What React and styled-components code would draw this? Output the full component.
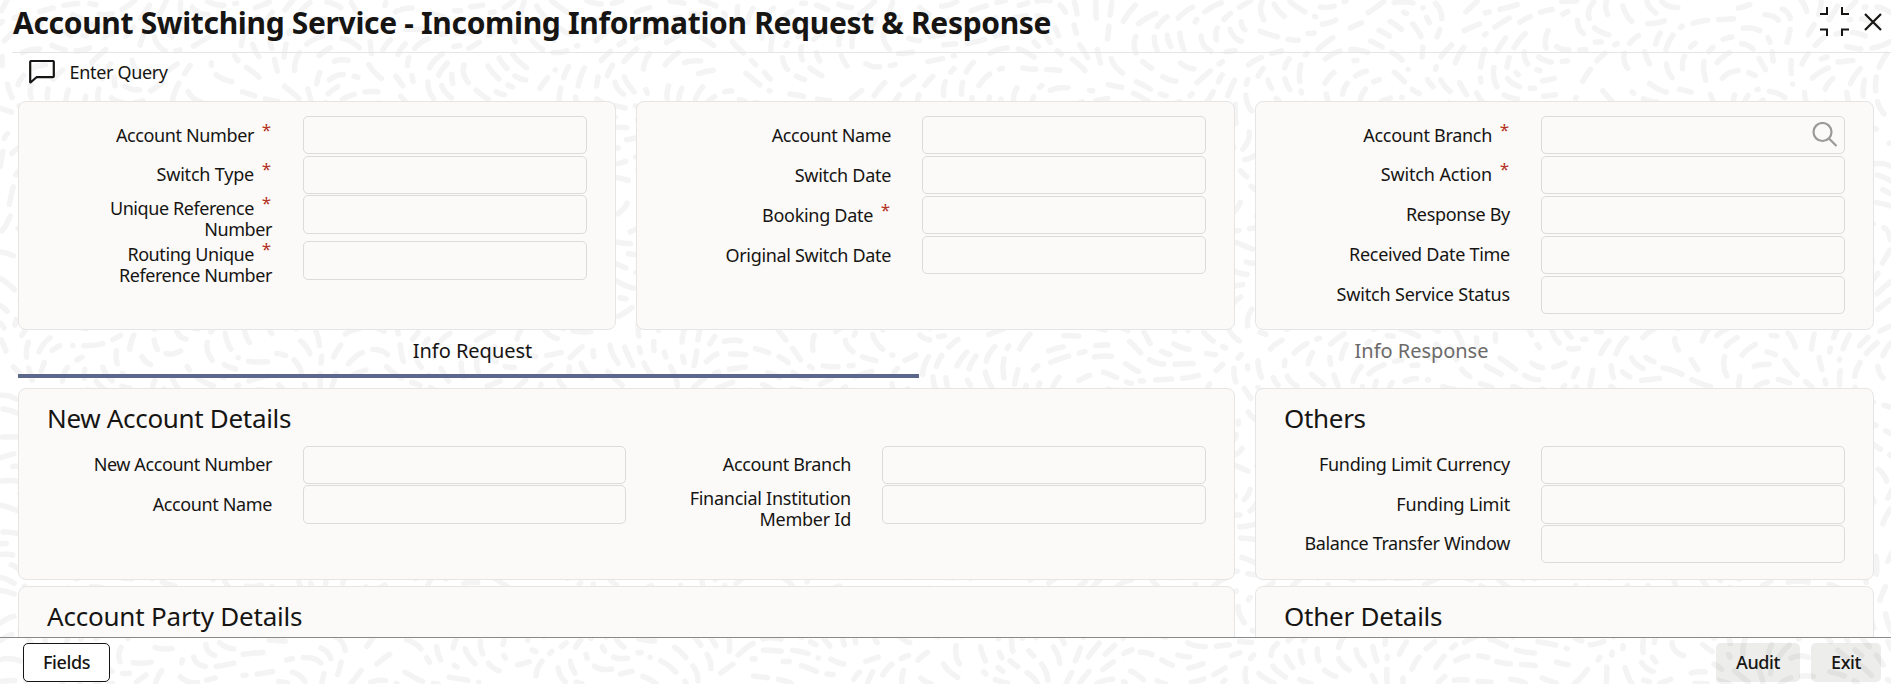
import React from 'react'
import styled, {createGlobalStyle} from 'styled-components'

// rows of short dashes that follow a slowly turning field
const buildPattern = (width, height) => {
  let seed = 11
  const rand = () => {
    seed = (seed * 16807) % 2147483647
    return seed / 2147483647
  }
  const angleAt = (x, y) =>
    1.9 * Math.sin(x / 58 + 0.9 * Math.sin(y / 51)) +
    1.6 * Math.cos(y / 44 - 0.8 * Math.sin(x / 67)) +
    0.25 * Math.sin((x + y) / 13)

  const cols = Math.ceil(width / 2)
  const rows = Math.ceil(height / 2)
  const owner = new Uint16Array(cols * rows)
  const at = (x, y) => {
    const cx = Math.floor(x / 2)
    const cy = Math.floor(y / 2)
    return cx < 0 || cy < 0 || cx >= cols || cy >= rows ? -1 : cy * cols + cx
  }
  const mark = (x, y, id) => {
    for (let dy = -10; dy <= 10; dy += 2) {
      for (let dx = -10; dx <= 10; dx += 2) {
        const cell = at(x + dx, y + dy)
        if (dx * dx + dy * dy <= 100 && cell >= 0 && !owner[cell]) owner[cell] = id
      }
    }
  }

  let paths = ''
  for (let id = 1; id < 14000; id++) {
    const sx = rand() * width
    const sy = rand() * height
    if (owner[at(sx, sy)]) continue
    const walk = (dir) => {
      const pts = []
      let x = sx
      let y = sy
      const max = 2 + rand() * 7
      for (let i = 0; i < max; i++) {
        const a = angleAt(x, y)
        x += Math.cos(a) * 3 * dir
        y += Math.sin(a) * 3 * dir
        const cell = at(x, y)
        if (cell < 0 || owner[cell]) break
        pts.push([x, y])
      }
      return pts
    }
    const pts = [...walk(-1).reverse(), [sx, sy], ...walk(1)]
    pts.forEach(([x, y]) => mark(x, y, id))
    if (pts.length < 2) continue
    const dash = 12 + Math.round(rand() * 8)
    paths += `<path stroke-dasharray="${dash} 11" d="M${pts.map((p) => p[0].toFixed(1) + ' ' + p[1].toFixed(1)).join('L')}"/>`
  }
  const svg = `<svg xmlns="http://www.w3.org/2000/svg" width="${width}" height="${height}"><g fill="none" stroke="#f4f4f4" stroke-width="5.5" stroke-linecap="round">${paths}</g></svg>`
  return `url("data:image/svg+xml,${encodeURIComponent(svg)}")`
}

const pattern = buildPattern(1891, 684)

const GlobalStyle = createGlobalStyle`
  * {
    box-sizing: border-box;
  }
  body {
    margin: 0;
    background: #fff;
  }
`

const Page = styled.div`
  display: flex;
  flex-direction: column;
  width: 1891px;
  height: 684px;
  overflow: hidden;
  color: #161513;
  background: #fff ${pattern};
  font-family: 'Noto Sans', 'Open Sans', sans-serif;
  font-size: 18px;
  letter-spacing: -0.38px;
`

const Header = styled.header`
  display: flex;
  justify-content: space-between;
  flex: none;
  height: 53px;
  margin-left: 12px;
  border-bottom: 1px solid #e6e5e4;
`

const Title = styled.h1`
  margin: 0;
  padding-left: 1px;
  font-size: 30px;
  font-weight: 700;
  line-height: 45px;
  letter-spacing: -0.33px;
`

const WindowActions = styled.div`
  display: flex;
  align-items: center;
  gap: 15px;
  height: 43px;
  padding-right: 9px;
`

const Toolbar = styled.div`
  display: flex;
  align-items: center;
  flex: none;
  gap: 14.5px;
  height: 48px;
  padding: 0 0 10px 29px;
  letter-spacing: -0.33px;
`

const Content = styled.main`
  flex: 1;
  min-height: 0;
  overflow: hidden;
  padding: 0 16px 0 18px;
`

const CardRow = styled.div`
  display: grid;
  grid-template-columns: ${pr => pr.$columns};
  column-gap: 20px;
  margin-top: ${pr => pr.$top || 0}px;
`

const Card = styled.section`
  height: ${pr => pr.$height}px;
  padding: ${pr => pr.$titled ? 13.5 : 14}px 28px 0;
  border: 1px solid #e7e5e4;
  border-radius: 8px;
  background: #fbfaf8;
`

const CardTitle = styled.h2`
  margin: 0 0 12.1px;
  font-size: 26px;
  font-weight: 400;
  line-height: 31px;
  letter-spacing: ${pr => pr.$spacing || -0.32}px;
`

const Columns = styled.div`
  display: grid;
  grid-template-columns: 579px 541px;
  column-gap: 39px;
`

const Row = styled.div`
  display: grid;
  grid-template-columns: 1fr ${pr => pr.$input}px;
  column-gap: 31px;
  align-items: start;
  height: ${pr => pr.$height}px;
`

const Label = styled.label`
  justify-self: end;
  max-width: ${pr => pr.$wide ? 215 : 186}px;
  padding-top: ${pr => pr.$twoLines ? 2.6 : 8.5}px;
  line-height: 21px;
  letter-spacing: ${pr => pr.$spacing}px;
  text-align: right;
`

const Star = styled.span`
  float: right;
  width: 18px;
  height: 21px;
  padding-right: 1px;
  color: #b3311f;
  font-size: 17px;
  line-height: 9px;
  letter-spacing: 0;
`

const Field = styled.div`
  display: flex;
  justify-content: flex-end;
  height: 38.4px;
  padding: 5px 6px;
  border: 1px solid #dddbda;
  border-radius: 5px;
`

const Tabs = styled.div`
  display: grid;
  grid-template-columns: 901px 901px;
  column-gap: 48px;
  height: 48px;
`

const Tab = styled.div`
  padding-left: 8px;
  border-bottom: 4px solid ${pr => pr.$active ? '#5c678c' : 'transparent'};
  color: ${pr => pr.$active ? '#161513' : '#6b6a68'};
  font-size: 20px;
  line-height: 41px;
  letter-spacing: -0.03px;
  text-align: center;
`

const Footer = styled.footer`
  display: flex;
  flex: none;
  gap: 11px;
  height: 47px;
  padding: 5px 10px 0 23px;
  border-top: 1px solid #8b8987;
`

const Button = styled.button`
  width: ${pr => pr.$width}px;
  height: 39px;
  margin: 0;
  padding: 0 0 2px;
  border: 1px solid ${pr => pr.$outlined ? '#161513' : 'transparent'};
  border-radius: 5px;
  background: ${pr => pr.$outlined ? '#fff' : 'rgba(22, 21, 19, 0.08)'};
  color: #161513;
  font: inherit;
  font-weight: 500;
  letter-spacing: -0.4px;
`

const Spacer = styled.div`
  flex: 1;
`

const CollapseIcon = () => (
  <svg width="29" height="29" viewBox="0 0 29 29" fill="none" stroke="#161513" strokeWidth="2">
    <path d="M7 0v7H0M22 0v7h7M0 22.500h7V29M29 22.500h-7V29" />
  </svg>
)

const CloseIcon = () => (
  <svg width="18" height="18" viewBox="0 0 18 18" fill="none" stroke="#161513" strokeWidth="2.200">
    <path d="M1 1l16 16M17 1L1 17" />
  </svg>
)

const QueryIcon = () => (
  <svg width="26" height="24" viewBox="0 0 26 24" fill="none" stroke="#161513" strokeWidth="2.200" strokeLinejoin="round">
    <path d="M1.200 2a1 1 0 0 1 1-1h21.600a1 1 0 0 1 1 1v14.200a1 1 0 0 1-1 1H7.500L1.800 22.300h-.6z" />
  </svg>
)

const SearchIcon = () => (
  <svg width="26" height="26" viewBox="0 0 26 26" fill="none" stroke="#9b9a98" strokeWidth="2.200">
    <circle cx="10.500" cy="10" r="9" />
    <path d="M17 16.500l7.500 7.500" />
  </svg>
)

const FormRow = ({label, required, twoLines, wide, search, spacing = -0.38, input, height}) => {
  return (
    <Row $input={input} $height={height}>
      <Label $twoLines={twoLines} $wide={wide} $spacing={spacing}>
        {required && <Star>*</Star>}
        {label}
      </Label>
      <Field>{search && <SearchIcon />}</Field>
    </Row>
  )
}

const App = () => {
  return (
    <Page>
      <GlobalStyle />
      <Header>
        <Title>Account Switching Service - Incoming Information Request &amp; Response</Title>
        <WindowActions>
          <CollapseIcon />
          <CloseIcon />
        </WindowActions>
      </Header>
      <Toolbar>
        <QueryIcon />
        <span>Enter Query</span>
      </Toolbar>
      <Content>
        <CardRow $columns="598px 599px 619px">
          <Card $height={229}>
            <FormRow label="Account Number" required input={284} height={39.6} />
            <FormRow label="Switch Type" required spacing={-0.2} input={284} height={39.6} />
            <FormRow label="Unique Reference Number" required twoLines spacing={-0.42} input={284} height={46} />
            <FormRow label="Routing Unique Reference Number" required twoLines spacing={-0.42} input={284} height={46} />
          </Card>
          <Card $height={229}>
            <FormRow label="Account Name" input={284} height={40} />
            <FormRow label="Switch Date" spacing={-0.3} input={284} height={40} />
            <FormRow label="Booking Date" required spacing={-0.3} input={284} height={40} />
            <FormRow label="Original Switch Date" spacing={-0.32} input={284} height={40} />
          </Card>
          <Card $height={229}>
            <FormRow label="Account Branch" required search spacing={-0.3} input={304} height={39.7} />
            <FormRow label="Switch Action" required spacing={-0.12} input={304} height={40.3} />
            <FormRow label="Response By" spacing={-0.3} input={304} height={40} />
            <FormRow label="Received Date Time" wide spacing={-0.28} input={304} height={39.6} />
            <FormRow label="Switch Service Status" wide spacing={-0.17} input={304} height={40} />
          </Card>
        </CardRow>
        <Tabs>
          <Tab $active>Info Request</Tab>
          <Tab>Info Response</Tab>
        </Tabs>
        <CardRow $columns="1217px 619px" $top={10}>
          <Card $height={192} $titled>
            <CardTitle>New Account Details</CardTitle>
            <Columns>
              <div>
                <FormRow label="New Account Number" spacing={-0.41} input={323} height={39.6} />
                <FormRow label="Account Name" input={323} height={39.6} />
              </div>
              <div>
                <FormRow label="Account Branch" spacing={-0.33} input={324} height={39.6} />
                <FormRow label="Financial Institution Member Id" twoLines spacing={-0.26} input={324} height={46} />
              </div>
            </Columns>
          </Card>
          <Card $height={192} $titled>
            <CardTitle>Others</CardTitle>
            <FormRow label="Funding Limit Currency" wide spacing={-0.27} input={304} height={39.6} />
            <FormRow label="Funding Limit" spacing={-0.2} input={304} height={39.6} />
            <FormRow label="Balance Transfer Window" wide spacing={-0.36} input={304} height={39.6} />
          </Card>
        </CardRow>
        <CardRow $columns="1217px 619px" $top={6}>
          <Card $height={192} $titled>
            <CardTitle $spacing={-0.2}>Account Party Details</CardTitle>
          </Card>
          <Card $height={192} $titled>
            <CardTitle $spacing={-0.24}>Other Details</CardTitle>
          </Card>
        </CardRow>
      </Content>
      <Footer>
        <Button $width={87} $outlined>Fields</Button>
        <Spacer />
        <Button $width={84}>Audit</Button>
        <Button $width={70}>Exit</Button>
      </Footer>
    </Page>
  )
}

export default App
